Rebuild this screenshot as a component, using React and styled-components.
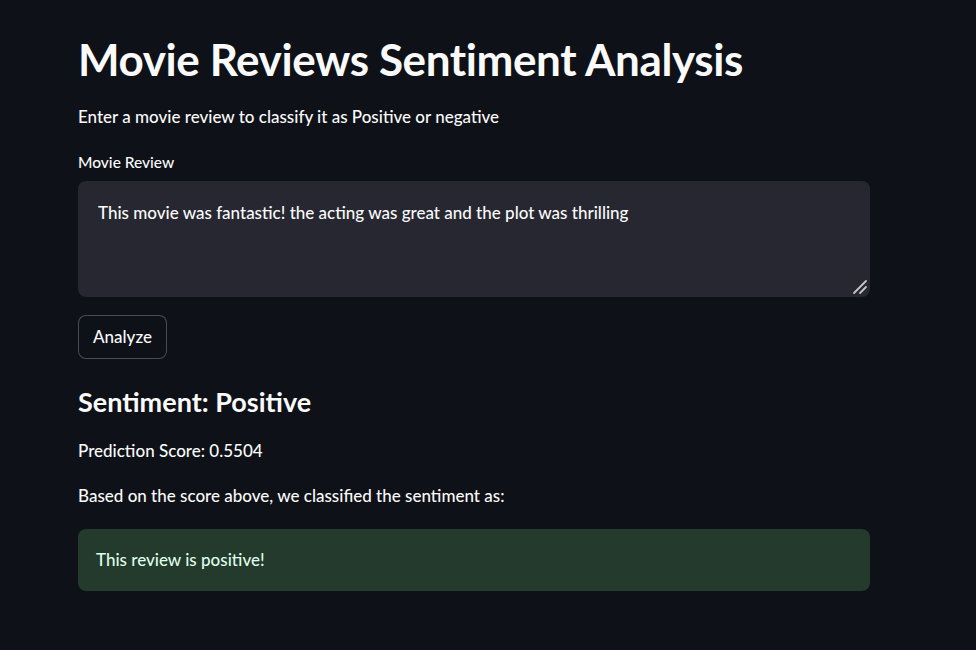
import React from 'react';
import styled, { createGlobalStyle } from 'styled-components';

const GlobalStyle = createGlobalStyle`
  html, body {
    margin: 0;
    padding: 0;
    background: #0e1117;
    color: #fafafa;
    font-family: Lato, "Noto Sans", sans-serif;
  }
`;

const Page = styled.main`
  min-height: 650px;
  background: #0e1117;
  padding: 33px 106px 40px 78px;
  box-sizing: border-box;
  display: flex;
  flex-direction: column;
  width: 976px;
`;

const Title = styled.h1`
  font-size: 44px;
  font-weight: 700;
  line-height: 1.2;
  margin: 0 0 18px;
  letter-spacing: -0.4px;
`;

const Text = styled.p`
  font-size: 17px;
  font-weight: 500;
  line-height: 26px;
  margin: 0 0 ${(p) => p.$gap || 16}px;
`;

const Label = styled.label`
  font-size: 15.5px;
  font-weight: 500;
  line-height: 22px;
  margin-bottom: 8px;
`;

const AreaWrap = styled.div`
  position: relative;
  height: 116px;
`;

const Area = styled.textarea`
  box-sizing: border-box;
  display: block;
  width: 100%;
  height: 100%;
  background: #262730;
  color: #fafafa;
  border: none;
  border-radius: 8px;
  padding: 18px 20px;
  font-family: inherit;
  font-size: 17px;
  font-weight: 500;
  line-height: 1.6;
  resize: none;
  outline: none;
`;

const Grip = styled.svg`
  position: absolute;
  right: 2px;
  bottom: 2px;
  pointer-events: none;
`;

const Button = styled.button`
  align-self: flex-start;
  margin: 18px 0 25px;
  height: 44px;
  padding: 0 14px;
  background: #0e1117;
  color: #fafafa;
  border: 1px solid rgba(250, 250, 250, 0.25);
  border-radius: 8px;
  font-family: inherit;
  font-size: 17px;
  font-weight: 500;
`;

const SubTitle = styled.h3`
  font-size: 27px;
  font-weight: 700;
  line-height: 1.3;
  margin: 0 0 19px;
`;

const Alert = styled.div`
  background: #233a2d;
  color: #dffde9;
  border-radius: 8px;
  padding: 18px 18px 19px;
  font-size: 17px;
  font-weight: 500;
  line-height: 25px;
`;

export default function App() {
  return (
    <>
      <GlobalStyle />
      <Page>
        <Title>Movie Reviews Sentiment Analysis</Title>
        <Text $gap={21}>Enter a movie review to classify it as Positive or negative</Text>
        <Label htmlFor="review">Movie Review</Label>
        <AreaWrap>
          <Area
            id="review"
            defaultValue="This movie was fantastic! the acting was great and the plot was thrilling"
          />
          <Grip width="16" height="16" viewBox="0 0 16 16">
            <path d="M2 14 L14 2 M8 14 L14 8" stroke="#c4c4c8" strokeWidth="1.8" strokeLinecap="round" fill="none" />
          </Grip>
        </AreaWrap>
        <Button>Analyze</Button>
        <SubTitle>Sentiment: Positive</SubTitle>
        <Text $gap={19}>Prediction Score: 0.5504</Text>
        <Text $gap={20}>Based on the score above, we classified the sentiment as:</Text>
        <Alert>This review is positive!</Alert>
      </Page>
    </>
  );
}
